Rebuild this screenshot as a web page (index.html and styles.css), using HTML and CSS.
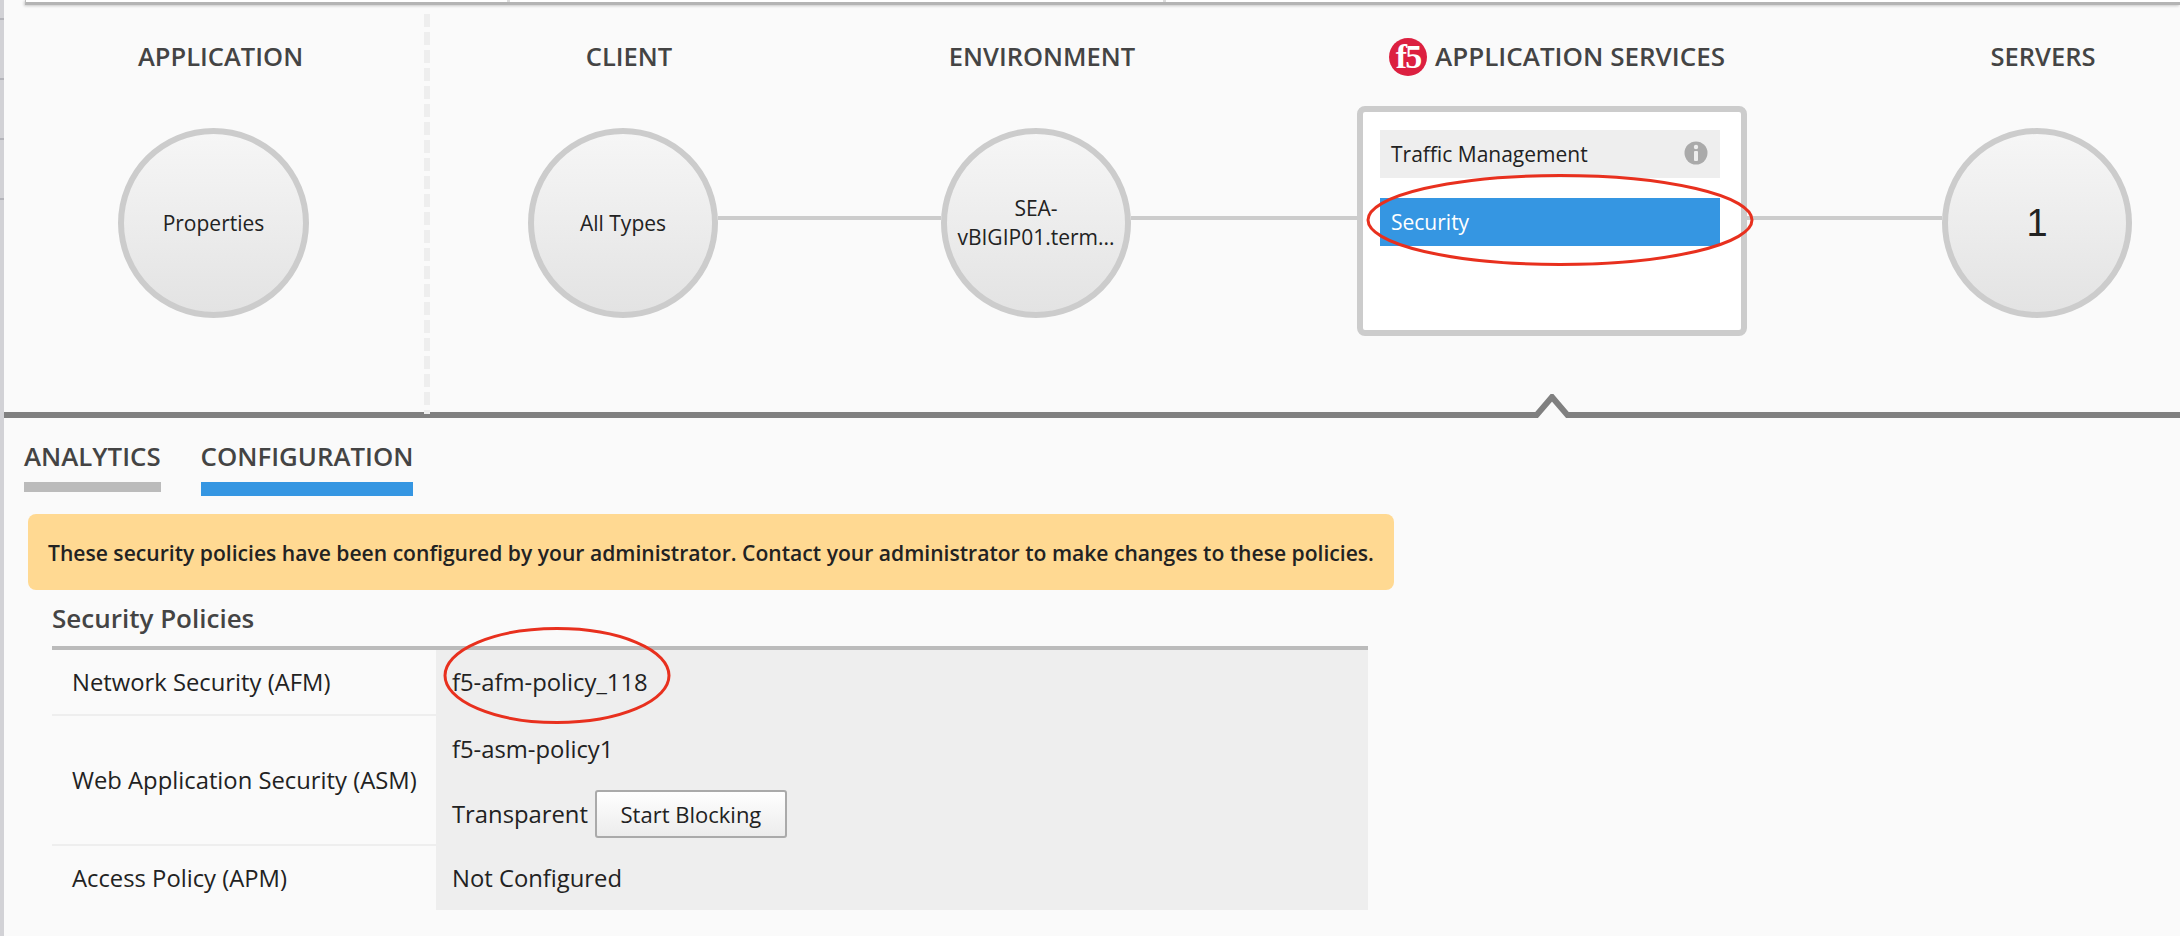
FILE: index.html
```html
<!DOCTYPE html>
<html lang="en">
<head>
<meta charset="utf-8">
<title>Application Services</title>
<link rel="stylesheet" href="styles.css">
</head>
<body>
<div class="page">
  <div class="edge"><i></i><i></i><i></i><i></i></div>
  <div class="main">
    <div class="topbar"><span class="seg seg-a"></span><span class="seg seg-b"></span><span class="seg seg-c"></span></div>
    <section class="stage">
      <div class="app-col">
        <h2 class="heading">APPLICATION</h2>
        <div class="node node-app">Properties</div>
      </div>
      <div class="divider"></div>
      <div class="flow">
        <h2 class="heading c1">CLIENT</h2>
        <h2 class="heading c3">ENVIRONMENT</h2>
        <h2 class="heading c5 heading-logo">
          <span class="logo">f5</span>
          APPLICATION SERVICES
        </h2>
        <h2 class="heading c7">SERVERS</h2>
        <div class="node c1 r2">All Types</div>
        <div class="link c2 r2"></div>
        <div class="node c3 r2">SEA-<br>vBIGIP01.term...</div>
        <div class="link c4 r2"></div>
        <div class="services c5 r2">
          <div class="svc svc-off">Traffic Management
            <svg class="info" viewBox="0 0 24 24" aria-hidden="true"><circle cx="12" cy="12" r="11.5" fill="#aaa"/><circle cx="12" cy="6" r="2.2" fill="#eee"/><rect x="10" y="10" width="4" height="10" rx="1" fill="#eee"/></svg>
          </div>
          <div class="svc svc-on">Security</div>
        </div>
        <div class="link c6 r2"></div>
        <div class="node node-num c7 r2">1</div>
      </div>
      <svg class="pointer" viewBox="0 0 36 24" aria-hidden="true"><path d="M0 24 L18 3 L36 24" fill="#fafafa" stroke="#808080" stroke-width="6"/></svg>
    </section>
    <section class="detail">
      <div class="tabs">
        <div class="tab">ANALYTICS</div>
        <div class="tab tab-active">CONFIGURATION</div>
      </div>
      <div class="alert">These security policies have been configured by your administrator. Contact your administrator to make changes to these policies.</div>
      <h3 class="policies-title">Security Policies</h3>
      <table class="policies">
        <tr><th>Network Security (AFM)</th><td>f5-afm-policy_118</td></tr>
        <tr><th>Web Application Security (ASM)</th><td class="multi"><div class="val-line">f5-asm-policy1</div><div class="val-line">Transparent <button class="btn" type="button">Start Blocking</button></div></td></tr>
        <tr><th>Access Policy (APM)</th><td>Not Configured</td></tr>
      </table>
    </section>
  </div>
  <svg class="mark mark-a" viewBox="0 0 388 92" aria-hidden="true"><ellipse cx="194" cy="46" rx="192" ry="44.5"/></svg>
  <svg class="mark mark-b" viewBox="0 0 228 97" aria-hidden="true"><ellipse cx="114" cy="48.5" rx="112" ry="47"/></svg>
</div>
</body>
</html>
```
FILE: styles.css
```css
* { box-sizing: border-box; }
html, body { margin: 0; height: 100%; }
body { background: #fafafa; font-family: "Open Sans", "Liberation Sans", sans-serif; color: #222; overflow: hidden; }
.page { position: relative; display: flex; height: 936px; }
.edge { width: 4px; flex: none; background: #d2d2d6; padding-top: 18px; display: flex; flex-direction: column; gap: 58px; }
.edge i { display: block; height: 2px; background: #b4b4ba; }
.main { flex: 1; min-width: 0; display: flex; flex-direction: column; }
.topbar { height: 5px; margin-left: 21px; flex: none; display: flex; background: #fff; border-bottom: 3px solid #b4b4b4; border-left: 1px solid #bbb; box-shadow: -1px 1px 3px rgba(0,0,0,.2); }
.seg { display: block; height: 2px; border-right: 3px solid #ddd; }
.seg-a { width: 484px; }
.seg-b { width: 656px; }
.seg-c { flex: 1; border-right: 0; }

.stage { position: relative; height: 413px; flex: none; display: flex; border-bottom: 6px solid #808080; }
.heading { margin: 0; font-size: 25.5px; line-height: 32px; font-weight: 600; color: #444; white-space: nowrap; }
.app-col { width: 420px; flex: none; padding-top: 35px; }
.app-col .heading { padding-left: 134px; }
.divider { width: 6px; flex: none; margin: 9px 0 -2px; position: relative; background: repeating-linear-gradient(#eee 0 13px, transparent 13px 18px); }
.node { width: 190px; height: 190px; border-radius: 50%; border: 6px solid #ccc; background: linear-gradient(#f6f6f6, #e3e3e3); display: flex; align-items: center; justify-content: center; text-align: center; font-size: 21px; line-height: 29px; color: #222; }
.node-app { width: 191px; margin: 56px 0 0 114px; }
.flow .node { margin-top: 4px; }
.flow { flex: 1; min-width: 0; display: grid; grid-template-columns: 190px 223px 190px 226px 390px 195px 190px; grid-template-rows: 32px 230px; row-gap: 34px; padding: 35px 0 0 98px; align-content: start; align-items: center; }
.c1 { grid-column: 1; } .c2 { grid-column: 2; } .c3 { grid-column: 3; } .c4 { grid-column: 4; } .c5 { grid-column: 5; } .c6 { grid-column: 6; } .c7 { grid-column: 7; }
.r2 { grid-row: 2; }
.flow .heading { grid-row: 1; justify-self: center; padding-left: 12px; }
.flow .heading-logo { display: flex; align-items: center; gap: 8px; padding-left: 10px; font-size: 26px; }
.logo { width: 38px; height: 38px; flex: none; margin-top: 2px; border-radius: 50%; background: #dc2040; display: flex; align-items: center; justify-content: center; font-family: "Liberation Serif", serif; font-weight: 700; font-size: 34px; line-height: 38px; letter-spacing: -2px; color: #fff; }
.link { height: 4px; background: #ccc; margin-bottom: 6px; }
.flow .node-num { font-size: 38px; font-family: "Liberation Sans", sans-serif; }
.services { height: 230px; background: #fff; border: 6px solid #ccc; border-radius: 8px; padding: 18px 21px 0 17px; display: flex; flex-direction: column; gap: 20px; }
.svc { height: 48px; display: flex; align-items: center; justify-content: space-between; padding: 0 12px 0 11px; font-size: 21px; }
.svc-off { background: #eee; color: #222; }
.svc-on { background: #3596e2; color: #fff; }
.info { width: 24px; height: 24px; flex: none; margin-top: -2px; }
.pointer { position: absolute; left: 1530px; bottom: -6px; width: 36px; height: 24px; }

.detail { padding: 22px 0 0 20px; }
.tabs { display: flex; gap: 40px; align-items: flex-start; }
.tab { font-size: 25.8px; line-height: 32px; font-weight: 600; color: #444; height: 52px; border-bottom: 10px solid #bbb; }
.tab-active { height: 56px; border-bottom: 14px solid #3596e2; }
.alert { margin: 18px 0 0 4px; width: 1366px; height: 76px; background: #ffd992; border-radius: 8px; display: flex; align-items: center; padding-left: 20px; font-size: 21.1px; font-weight: 600; color: #222; white-space: nowrap; }
.policies-title { margin: 12px 0 0 28px; font-size: 26px; line-height: 32px; font-weight: 600; color: #444; }
.policies { margin: 12px 0 0 28px; width: 1316px; height: 264px; border-collapse: separate; border-spacing: 0; border-top: 4px solid #bbb; font-size: 23.8px; table-layout: fixed; }
.policies th { width: 384px; text-align: left; font-weight: 400; padding: 0 0 0 20px; color: #222; background: #fafafa; white-space: nowrap; }
.policies td { background: #eee; padding: 0 0 0 16px; color: #222; }
.policies tr + tr th, .policies tr + tr td { border-top: 2px solid #eee; }
.policies tr:first-child { height: 64px; }
.policies tr:nth-child(2) { height: 130px; }
.policies tr:nth-child(3) { height: 66px; }
.policies .multi { vertical-align: top; padding-top: 9px; }
.val-line { display: flex; align-items: center; gap: 7px; height: 48px; }
.val-line + .val-line { margin-top: 17px; }
.btn { width: 192px; height: 48px; font: inherit; font-size: 22px; color: #222; background: linear-gradient(#fff, #ececec); border: 2px solid #aaa; border-radius: 3px; padding: 0; }

.mark { position: absolute; fill: none; stroke: #e8301e; stroke-width: 3; }
.mark-a { left: 1366px; top: 174px; width: 388px; height: 92px; }
.mark-b { left: 443px; top: 627px; width: 228px; height: 97px; }
```
